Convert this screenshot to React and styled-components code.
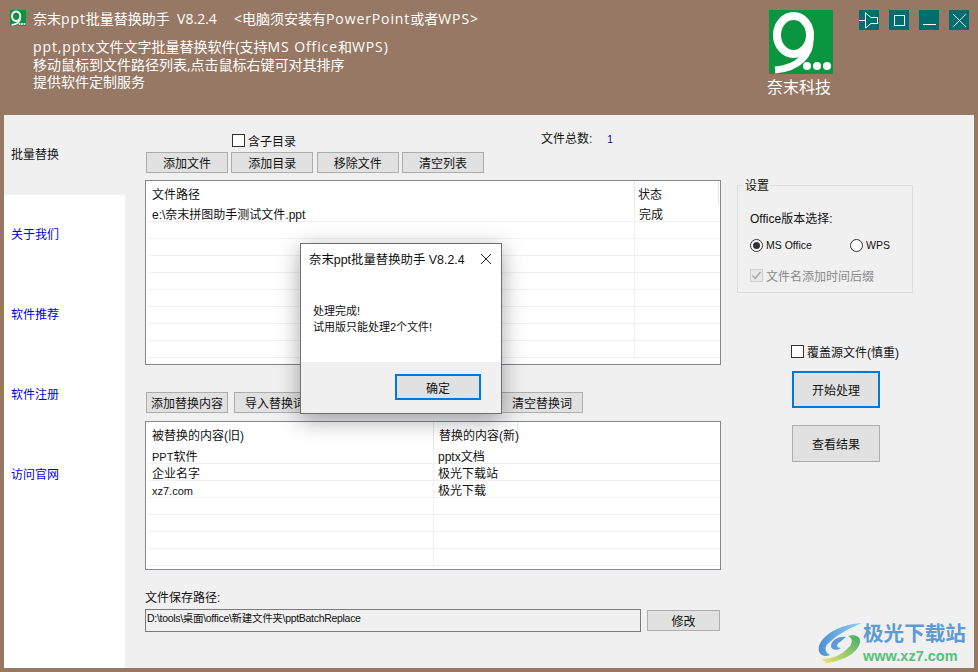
import React from 'react';
import styled, { createGlobalStyle } from 'styled-components';

const GlobalStyle = createGlobalStyle`
   html, body {
      margin: 0;
      padding: 0;
   }
   body {
      font-family: "Liberation Sans", "Noto Sans CJK SC", sans-serif;
      font-size: 12px;
      color: #111;
   }
   * {
      box-sizing: border-box;
   }
`;

const Latin = styled.span`
   font-size: 11px;
`;
const Wide = styled.span`
   letter-spacing: 0.9px;
`;

const files = [['e:\\奈末拼图助手测试文件.ppt', '完成'], ['', ''], ['', ''], ['', ''], ['', ''], ['', ''], ['', ''], ['', ''], ['', '']];
const words = [
   [<><Latin>PPT</Latin>软件</>, 'pptx文档'],
   ['企业名字', '极光下载站'],
   [<Latin>xz7.com</Latin>, '极光下载'],
   ['', ''], ['', ''], ['', ''], ['', ''],
];
const navItems = ['关于我们', '软件推荐', '软件注册', '访问官网'];

const LogoMark = ({ size }) => (
   <svg width={size} height={size} viewBox="0 0 64 64">
      <rect width="64" height="64" fill="#0a9640" />
      <ellipse cx="24.5" cy="25" rx="16.5" ry="19" fill="none" stroke="#fff" strokeWidth="8" />
      <path d="M41 28 C42 44 30 58 6 60" fill="none" stroke="#fff" strokeWidth="7" />
      <circle cx="38" cy="56" r="4" fill="#fff" />
      <circle cx="48" cy="56" r="4" fill="#fff" />
      <circle cx="58" cy="56" r="4" fill="#fff" />
   </svg>
);

const App = () => {
   return (
      <>
         <GlobalStyle />
         <Window>
            <Header>
               <HeaderText>
                  <TitleRow>
                     <LogoMark size={16} />
                     <AppTitle>奈末<Wide>ppt</Wide>批量替换助手&nbsp; V8.2.4</AppTitle>
                     <AppNote>&lt;电脑须安装有<Wide>PowerPoint</Wide>或者<Wide>WPS</Wide>&gt;</AppNote>
                  </TitleRow>
                  <Intro>
                     <p><Wide>ppt,pptx</Wide>文件文字批量替换软件(支持<Wide>MS Office</Wide>和<Wide>WPS</Wide>)</p>
                     <p>移动鼠标到文件路径列表,点击鼠标右键可对其排序</p>
                     <p>提供软件定制服务</p>
                  </Intro>
               </HeaderText>
               <Brand>
                  <LogoMark size={64} />
                  <BrandName>奈末科技</BrandName>
               </Brand>
               <WinButtons>
                  <WinButton>
                     <svg width="20" height="20" viewBox="0 0 20 20" fill="none" stroke="#fff">
                        <path d="M0 10.5H6.5M6.5 2.5V18M6.5 3L12 7.5H18.5V13.5H12L6.5 18" />
                     </svg>
                  </WinButton>
                  <WinButton>
                     <svg width="20" height="20" viewBox="0 0 20 20" fill="none" stroke="#fff">
                        <rect x="5.5" y="5.5" width="10" height="10" />
                     </svg>
                  </WinButton>
                  <WinButton>
                     <svg width="20" height="20" viewBox="0 0 20 20" fill="none" stroke="#fff">
                        <path d="M4 14.5H17" />
                     </svg>
                  </WinButton>
                  <WinButton>
                     <svg width="20" height="20" viewBox="0 0 20 20" fill="none" stroke="#fff">
                        <path d="M4 4L17 17M17 4L4 17" />
                     </svg>
                  </WinButton>
               </WinButtons>
            </Header>
            <Body>
               <Sidebar>
                  <NavItem $active>批量替换</NavItem>
                  {navItems.map((item) => (
                     <NavItem key={item}>{item}</NavItem>
                  ))}
               </Sidebar>
               <Main>
                  <TopRow>
                     <CheckLabel $left={87}>
                        <CheckBox />
                        含子目录
                     </CheckLabel>
                     <FileCount>文件总数:<CountValue>1</CountValue></FileCount>
                  </TopRow>
                  <Toolbar>
                     <Button>添加文件</Button>
                     <Button>添加目录</Button>
                     <Button>移除文件</Button>
                     <Button>清空列表</Button>
                  </Toolbar>
                  <Table $height={185}>
                     <HeadRow $height={24} $col={489} $pad={3}>
                        <span>文件路径</span>
                        <span>状态</span>
                     </HeadRow>
                     {files.map((row, i) => (
                        <Row key={i} $col={487}>
                           <span>{row[0]}</span>
                           <span>{row[1]}</span>
                        </Row>
                     ))}
                  </Table>
                  <WordToolbar>
                     <Button>添加替换内容</Button>
                     <Button>导入替换词</Button>
                     <Button>导出替换词</Button>
                     <Button>清空替换词</Button>
                  </WordToolbar>
                  <Table $height={149}>
                     <HeadRow $height={25} $col={288} $pad={5}>
                        <span>被替换的内容(旧)</span>
                        <span>替换的内容(新)</span>
                     </HeadRow>
                     {words.map((row, i) => (
                        <Row key={i} $col={286}>
                           <span>{row[0]}</span>
                           <span>{row[1]}</span>
                        </Row>
                     ))}
                  </Table>
                  <SaveLabel>文件保存路径:</SaveLabel>
                  <SaveRow>
                     <PathBox>D:\tools\桌面\office\新建文件夹\pptBatchReplace</PathBox>
                     <EditButton>修改</EditButton>
                  </SaveRow>
               </Main>
               <Aside>
                  <Settings>
                     <Legend>设置</Legend>
                     <SettingTitle>Office版本选择:</SettingTitle>
                     <RadioRow>
                        <RadioLabel $width={100}>
                           <Radio $checked />
                           MS Office
                        </RadioLabel>
                        <RadioLabel $width={50}>
                           <Radio />
                           WPS
                        </RadioLabel>
                     </RadioRow>
                     <DisabledCheck>
                        <DisabledBox>
                           <svg width="13" height="13" viewBox="0 0 13 13" fill="none" stroke="#a8a8a8" strokeWidth="1.5">
                              <path d="M2.5 6.5L5.2 9.5L10.5 3" />
                           </svg>
                        </DisabledBox>
                        文件名添加时间后缀
                     </DisabledCheck>
                  </Settings>
                  <Overwrite>
                     <CheckBox />
                     覆盖源文件(慎重)
                  </Overwrite>
                  <BigButton $focused>开始处理</BigButton>
                  <BigButton>查看结果</BigButton>
               </Aside>
            </Body>

            <Dialog>
               <DialogTitle>
                  <span>奈末ppt批量替换助手 V8.2.4</span>
                  <svg width="12" height="12" viewBox="0 0 12 12" fill="none" stroke="#222">
                     <path d="M1 1L11 11M11 1L1 11" />
                  </svg>
               </DialogTitle>
               <DialogText>
                  <p>处理完成!</p>
                  <p>试用版只能处理2个文件!</p>
               </DialogText>
               <DialogFooter>
                  <DialogButton>确定</DialogButton>
               </DialogFooter>
            </Dialog>

            <Watermark>
               <svg width="44" height="42" viewBox="0 0 44 42">
                  <defs>
                     <linearGradient id="swirlA" x1="0" y1="0" x2="1" y2="0">
                        <stop offset="0" stopColor="#4f8fd0" />
                        <stop offset="1" stopColor="#8fd3f4" />
                     </linearGradient>
                     <linearGradient id="swirlB" x1="0" y1="1" x2="1" y2="0">
                        <stop offset="0" stopColor="#f0e36a" />
                        <stop offset="1" stopColor="#3fae6a" />
                     </linearGradient>
                  </defs>
                  <path d="M44 1 C26 2 6 10 1 24 C-1 32 6 36 12 33 C6 30 6 24 12 20 C20 12 32 6 44 1Z" fill="url(#swirlA)" />
                  <path d="M8 41 C22 40 40 32 42 20 C43 14 36 12 30 14 C35 16 35 22 30 26 C24 33 14 37 4 37Z" fill="url(#swirlB)" />
                  <path d="M28 15 C20 14 13 19 13 24 C13 28 19 29 23 26 C18 26 18 22 22 20 C24 18 26 17 28 15Z" fill="#5a9bd8" />
               </svg>
               <WatermarkText>
                  <WatermarkName>极光下载站</WatermarkName>
                  <WatermarkUrl>www.xz7.com</WatermarkUrl>
               </WatermarkText>
            </Watermark>
         </Window>
      </>
   );
};

const Window = styled.div`
   position: relative;
   width: 978px;
   height: 672px;
   padding: 0 4px 4px;
   background: #967864;
   overflow: hidden;
`;
const Header = styled.header`
   display: flex;
   height: 115px;
   color: #fff;
`;
const HeaderText = styled.div`
   width: 765px;
   padding: 10px 0 0 6px;
   font-family: "Open Sans", "Noto Sans CJK SC", sans-serif;
   font-size: 14px;
`;
const TitleRow = styled.div`
   display: flex;
   align-items: center;
   height: 16px;
`;
const AppTitle = styled.span`
   margin-left: 7px;
   width: 201px;
   white-space: nowrap;
`;
const AppNote = styled.span`
   white-space: nowrap;
`;
const Intro = styled.div`
   margin: 12px 0 0 23px;
   line-height: 17.5px;
   p {
      margin: 0;
      white-space: nowrap;
   }
`;
const Brand = styled.div`
   display: flex;
   flex-direction: column;
   align-items: center;
   width: 64px;
   padding-top: 10px;
`;
const BrandName = styled.div`
   margin: 3px 0 0 -4px;
   font-size: 16px;
   line-height: 22px;
   white-space: nowrap;
`;
const WinButtons = styled.div`
   display: flex;
   gap: 10px;
   margin: 10px 0 0 26px;
`;
const WinButton = styled.div`
   width: 20px;
   height: 20px;
   background: #006e6e;
   svg {
      display: block;
   }
`;
const Body = styled.div`
   display: flex;
   height: 553px;
   background: #f0f0f0;
`;
const Sidebar = styled.nav`
   width: 121px;
   background: #fff;
`;
const NavItem = styled.div`
   height: 80px;
   padding: 32px 0 0 7px;
   line-height: 16px;
   background: ${(p) => (p.$active ? '#f0f0f0' : '#fff')};
   color: ${(p) => (p.$active ? '#111' : '#0000e0')};
`;
const Main = styled.main`
   width: 596px;
   padding-left: 20px;
`;
const TopRow = styled.div`
   display: flex;
   height: 37px;
   padding-top: 17px;
`;
const CheckLabel = styled.label`
   display: flex;
   align-items: center;
   height: 16px;
   gap: 3px;
   margin-left: ${(p) => p.$left}px;
   white-space: nowrap;
`;
const CheckBox = styled.span`
   display: block;
   width: 13px;
   height: 13px;
   background: #fff;
   border: 1px solid #333;
`;
const FileCount = styled.span`
   margin: 1px 0 0 245px;
   line-height: 12px;
   font-size: 12px;
   white-space: nowrap;
`;
const CountValue = styled.span`
   margin-left: 15px;
   font-size: 10px;
   color: #000080;
`;
const Toolbar = styled.div`
   display: flex;
   gap: 3.34px;
   padding-left: 1px;
   height: 28px;
`;
const Button = styled.button`
   flex: none;
   width: 82px;
   height: 21px;
   padding: 0;
   background: #e1e1e1;
   border: 1px solid #adadad;
   border-radius: 0;
   font: inherit;
   color: #111;
`;
const Table = styled.div`
   width: 576px;
   height: ${(p) => p.$height}px;
   background: #fff;
   border: 1px solid #828790;
   overflow: hidden;
`;
const HeadRow = styled.div`
   display: grid;
   grid-template-columns: ${(p) => p.$col}px 84px;
   height: ${(p) => p.$height}px;
   align-items: center;
   span {
      height: 100%;
      padding: 6px 0 0 6px;
      line-height: 16px;
      border-right: 1px solid #e5e5e5;
      white-space: nowrap;
   }
   span:last-child {
      padding-left: ${(p) => p.$pad}px;
   }
`;
const Row = styled.div`
   display: grid;
   grid-template-columns: ${(p) => p.$col}px 1fr;
   height: 17px;
   line-height: 20px;
   margin-left: 2px;
   border-bottom: 1px solid #f0f0f0;
   span {
      height: 16px;
      padding-left: 4px;
      border-right: 1px solid #f0f0f0;
      white-space: nowrap;
   }
   span:last-child {
      padding-left: 4px;
      border-right: none;
   }
   span ${Latin} {
      padding: 0;
      border: none;
   }
`;
const WordToolbar = styled.div`
   display: flex;
   gap: 6px;
   height: 29px;
   margin-top: 27px;
   padding-left: 1px;
   button:nth-child(3) {
      margin-right: 91px;
   }
`;
const SaveLabel = styled.div`
   margin-top: 20px;
   height: 19px;
   line-height: 16px;
`;
const SaveRow = styled.div`
   display: flex;
   align-items: center;
   gap: 6px;
`;
const PathBox = styled.div`
   width: 496px;
   height: 23px;
   padding-left: 1px;
   line-height: 17px;
   font-size: 10.5px;
   letter-spacing: -0.3px;
   background: #f0f0f0;
   border: 1px solid #7a7a7a;
   white-space: nowrap;
`;
const EditButton = styled(Button)`
   width: 73px;
`;
const Aside = styled.aside`
   width: 190px;
   padding: 70px 0 0 16px;
`;
const Settings = styled.div`
   position: relative;
   width: 176px;
   height: 108px;
   padding-left: 12px;
   border: 1px solid #dcdcdc;
`;
const Legend = styled.span`
   position: absolute;
   left: 5px;
   top: -8px;
   padding: 0 2px;
   line-height: 16px;
   background: #f0f0f0;
`;
const SettingTitle = styled.div`
   margin-top: 25px;
   line-height: 16px;
`;
const RadioRow = styled.div`
   display: flex;
   margin-top: 10px;
`;
const RadioLabel = styled.label`
   display: flex;
   align-items: center;
   gap: 3px;
   width: ${(p) => p.$width}px;
   height: 16px;
   font-size: 10.5px;
`;
const Radio = styled.span`
   position: relative;
   display: block;
   width: 13px;
   height: 13px;
   background: #fff;
   border: 1px solid #333;
   border-radius: 50%;
   &::after {
      content: '';
      display: ${(p) => (p.$checked ? 'block' : 'none')};
      position: absolute;
      inset: 2px;
      background: #333;
      border-radius: 50%;
   }
`;
const DisabledCheck = styled.div`
   display: flex;
   align-items: center;
   gap: 3px;
   margin-top: 14px;
   height: 16px;
   color: #8a8a8a;
   white-space: nowrap;
`;
const DisabledBox = styled.span`
   display: block;
   width: 13px;
   height: 13px;
   background: #e8e8e8;
   border: 1px solid #cfcfcf;
   svg {
      display: block;
      margin: -1px;
   }
`;
const Overwrite = styled.label`
   display: flex;
   align-items: center;
   gap: 3px;
   height: 16px;
   margin: 50px 0 0 54px;
   white-space: nowrap;
`;
const BigButton = styled.button`
   display: block;
   width: 88px;
   height: 37px;
   margin: ${(p) => (p.$focused ? '12px' : '17px')} 0 0 55px;
   padding: 0;
   background: #e1e1e1;
   border: ${(p) => (p.$focused ? '2px solid #0078d7' : '1px solid #adadad')};
   border-radius: 0;
   font: inherit;
   color: #111;
`;
const Dialog = styled.div`
   position: absolute;
   left: 300px;
   top: 243px;
   display: flex;
   flex-direction: column;
   width: 202px;
   height: 171px;
   background: #fff;
   border: 1px solid #6f6f6f;
   box-shadow: 0 6px 22px rgba(0, 0, 0, 0.35);
`;
const DialogTitle = styled.div`
   display: flex;
   align-items: center;
   justify-content: space-between;
   height: 29px;
   padding: 0 9px 0 8px;
   font-size: 12.4px;
   white-space: nowrap;
`;
const DialogText = styled.div`
   flex: 1;
   padding-top: 30px;
   padding-left: 12px;
   font-size: 11px;
   line-height: 16px;
   p {
      margin: 0;
   }
`;
const DialogFooter = styled.div`
   height: 51px;
   padding: 12px 0 0 94px;
   background: #f0f0f0;
`;
const DialogButton = styled.button`
   display: block;
   width: 86px;
   height: 26px;
   padding: 0;
   background: #e1e1e1;
   border: 2px solid #0078d7;
   border-radius: 0;
   font: inherit;
   color: #111;
`;
const Watermark = styled.div`
   position: absolute;
   left: 818px;
   top: 620px;
   display: flex;
   gap: 1px;
   svg {
      margin-top: 2px;
   }
`;
const WatermarkText = styled.div`
   padding-top: 2px;
   white-space: nowrap;
`;
const WatermarkName = styled.div`
   font-size: 20.6px;
   line-height: 24px;
   font-weight: 700;
   color: #5c9bd6;
`;
const WatermarkUrl = styled.div`
   margin-top: 3px;
   font-size: 14.5px;
   line-height: 14px;
   font-weight: 700;
   color: #58c07a;
`;

export default App;
